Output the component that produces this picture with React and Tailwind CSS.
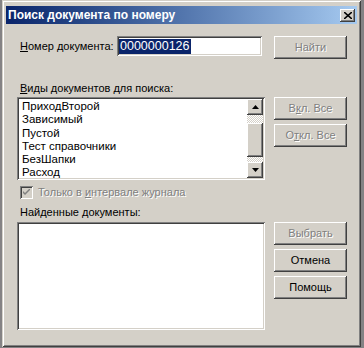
import React from "react";

const raised =
  "shadow-[inset_-1px_-1px_#404040,inset_1px_1px_#ffffff,inset_-2px_-2px_#808080,inset_2px_2px_#d4d0c8]";
const sunken =
  "shadow-[inset_1px_1px_#808080,inset_-1px_-1px_#ffffff,inset_2px_2px_#404040,inset_-2px_-2px_#d4d0c8]";
const disabledText = "text-[#808080] [text-shadow:1px_1px_0_#ffffff]";

function Btn({ children, disabled }) {
  return (
    <div
      className={`h-[23px] w-[73px] flex items-center justify-center bg-[#d4d0c8] ${raised} ${
        disabled ? disabledText : "text-black"
      }`}
    >
      {children}
    </div>
  );
}

function Arrow({ up }) {
  return (
    <div className={`w-[16px] h-[16px] bg-[#d4d0c8] ${raised} flex items-center justify-center`}>
      <svg width="7" height="4" viewBox="0 0 7 4">
        {up ? (
          <polygon points="3.5,0 7,4 0,4" fill="#000" />
        ) : (
          <polygon points="0,0 7,0 3.5,4" fill="#000" />
        )}
      </svg>
    </div>
  );
}

const checker =
  "[background-image:repeating-conic-gradient(#d4d0c8_0%_25%,#ffffff_0%_50%)] [background-size:2px_2px]";

export default function App() {
  const items = [
    "ПриходВторой",
    "Зависимый",
    "Пустой",
    "Тест справочники",
    "БезШапки",
    "Расход",
    "Доверенность",
  ];
  return (
    <div className="w-[364px] h-[348px] bg-[#848284] pl-[2px] pr-[3px] pb-[1px] font-['Liberation_Sans',sans-serif] text-[11px] text-black">
      <div
        className={`h-full bg-[#d4d0c8] px-[4px] pt-[6px] pb-[4px] flex flex-col shadow-[inset_1px_1px_#d4d0c8,inset_-1px_-1px_#404040,inset_2px_2px_#ffffff,inset_-2px_-2px_#808080]`}
      >
        {/* title bar */}
        <div className="h-[18px] bg-linear-to-r from-[#0a246a] to-[#a6caf0] flex items-center pl-[2px] pr-[2px]">
          <span className="flex-1 text-white font-bold text-[12px] leading-none">
            Поиск документа по номеру
          </span>
          <div className={`w-[15px] h-[13px] bg-[#d4d0c8] ${raised} flex items-center justify-center`}>
            <svg width="8" height="7" viewBox="0 0 8 7">
              <path d="M0 0 L8 7 M8 0 L0 7" stroke="#000" strokeWidth="1.6" />
            </svg>
          </div>
        </div>

        {/* content */}
        <div className="pl-[11px] flex flex-col">
          {/* row 1 */}
          <div className="mt-[12px] flex items-start">
            <div className="w-[248px] flex items-center h-[20px]">
              <span className="ml-[3px] w-[97px]">
                <u>Н</u>омер документа:
              </span>
              <div className={`w-[145px] h-[20px] bg-white ${sunken} flex items-center pl-[2px]`}>
                <span className="bg-[#0a246a] text-white text-[12.5px] px-[1px] leading-[15px]">
                  0000000126
                </span>
              </div>
            </div>
            <div className="ml-[9px]">
              <Btn disabled>Найти</Btn>
            </div>
          </div>

          {/* label 2 */}
          <div className="mt-[23px] ml-[3px] h-[13px] leading-[13px]">
            <u>В</u>иды документов для поиска:
          </div>

          {/* list 1 */}
          <div className="mt-[2px] flex items-start">
            <div className={`w-[248px] h-[83px] bg-white ${sunken} p-[2px] flex`}>
              <div className="flex-1 overflow-hidden pl-[3px] pt-[1px] text-[11.5px] leading-[13.3px]">
                {items.map((t) => (
                  <div key={t} className="whitespace-nowrap">
                    {t}
                  </div>
                ))}
              </div>
              <div className="w-[16px] flex flex-col">
                <Arrow up />
                <div className={`h-[8px] ${checker}`} />
                <div className={`h-[34px] bg-[#d4d0c8] ${raised}`} />
                <div className={`flex-1 ${checker}`} />
                <Arrow />
              </div>
            </div>
            <div className="ml-[9px] flex flex-col gap-[4px]">
              <Btn disabled>
                <span>
                  В<u>к</u>л. Все
                </span>
              </Btn>
              <Btn disabled>
                <span>
                  О<u>т</u>кл. Все
                </span>
              </Btn>
            </div>
          </div>

          {/* checkbox */}
          <div className="mt-[6px] ml-[3px] flex items-center h-[13px]">
            <div className={`w-[13px] h-[13px] bg-[#d4d0c8] ${sunken} flex items-center justify-center`}>
              <svg width="7" height="7" viewBox="0 0 7 7">
                <path d="M0 2 L0 4 L2 6 L7 1 L7 -1 L2 4 Z" fill="#808080" />
              </svg>
            </div>
            <span className={`ml-[5px] ${disabledText}`}>
              Только в <u>и</u>нтервале журнала
            </span>
          </div>

          {/* label 3 */}
          <div className="mt-[7px] ml-[3px] h-[13px] leading-[13px]">
            Найденные <u>д</u>окументы:
          </div>

          {/* list 2 */}
          <div className="mt-[3px] flex items-start">
            <div className={`w-[248px] h-[108px] bg-white ${sunken}`} />
            <div className="ml-[9px] flex flex-col gap-[4px]">
              <Btn disabled>Выбрать</Btn>
              <Btn>Отмена</Btn>
              <Btn>Помощь</Btn>
            </div>
          </div>
        </div>
      </div>
    </div>
  );
}
